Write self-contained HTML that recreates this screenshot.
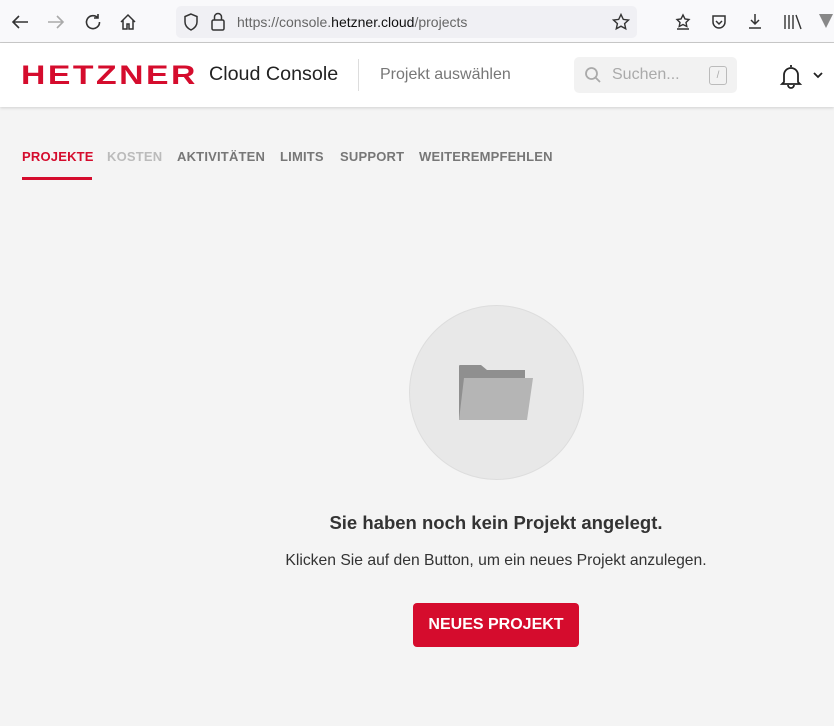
<!DOCTYPE html>
<html><head><meta charset="utf-8"><style>
*{box-sizing:border-box;margin:0;padding:0}
body{width:834px;height:726px;overflow:hidden;background:#f4f4f4;font-family:"Liberation Sans",sans-serif;position:relative}
.bar{position:absolute;left:0;top:0;width:834px;height:43px;background:#f9f9fb;border-bottom:1px solid #ccc}
.url{position:absolute;left:176px;top:6px;width:461px;height:32px;background:#f0f0f4;border-radius:5px}
.hdr{position:absolute;left:0;top:43px;width:834px;height:64px;background:#fff;box-shadow:0 1px 3px rgba(0,0,0,.15)}
.t{position:absolute;white-space:nowrap}
.nav{position:absolute;top:149px;font-size:13px;font-weight:bold;color:#777;letter-spacing:.2px}
svg{position:absolute}
</style></head><body>
<div class="bar">
<svg style="left:10px;top:13px" width="20" height="18" viewBox="0 0 20 18"><path d="M18 9H3M9 3L3 9l6 6" stroke="#333" stroke-width="1.6" fill="none"/></svg>
<svg style="left:46px;top:13px" width="20" height="18" viewBox="0 0 20 18"><path d="M2 9h15M11 3l6 6-6 6" stroke="#aaa" stroke-width="1.6" fill="none"/></svg>
<svg style="left:84px;top:13px" width="18" height="18" viewBox="0 0 18 18"><path d="M14 5A6.5 6.5 0 1 0 15.5 9M14 1v4h-4" stroke="#333" stroke-width="1.6" fill="none"/></svg>
<svg style="left:119px;top:13px" width="18" height="18" viewBox="0 0 18 18"><path d="M2 9L9 2l7 7M4 7v9h4v-5h2v5h4V7" stroke="#333" stroke-width="1.5" fill="none"/></svg>
<div class="url">
<svg style="left:7px;top:7px" width="16" height="18" viewBox="0 0 16 18"><path d="M8 1L2 3.5V9c0 4 3 6.5 6 8 3-1.5 6-4 6-8V3.5z" stroke="#333" stroke-width="1.5" fill="none"/></svg>
<svg style="left:34px;top:6px" width="16" height="19" viewBox="0 0 16 19"><rect x="2" y="8" width="12" height="10" rx="1.5" stroke="#333" stroke-width="1.5" fill="none"/><path d="M4.5 8V5a3.5 3.5 0 0 1 7 0v3" stroke="#333" stroke-width="1.5" fill="none"/></svg>
<div class="t" style="left:61px;top:8px;font-size:14px;color:#666">https://console.<span style="color:#111">hetzner.cloud</span>/projects</div>
<svg style="left:436px;top:7px" width="18" height="18" viewBox="0 0 18 18"><path d="M9 1.5l2.3 4.9 5.2.6-3.9 3.6 1.1 5.2L9 13.2l-4.7 2.6 1.1-5.2L1.5 7l5.2-.6z" stroke="#333" stroke-width="1.4" fill="none"/></svg>
</div>
<svg style="left:674px;top:13px" width="18" height="18" viewBox="0 0 18 18"><path d="M9 2l2 4 4 .5-3 3 .8 4L9 11.5 5.2 13.5 6 9.5 3 6.5 7 6z M3 16h12" stroke="#333" stroke-width="1.4" fill="none"/></svg>
<svg style="left:710px;top:13px" width="18" height="18" viewBox="0 0 18 18"><path d="M3 3h12v6a6 6 0 0 1-12 0z M6 8l3 3 3-3" stroke="#333" stroke-width="1.5" fill="none"/></svg>
<svg style="left:746px;top:12px" width="18" height="18" viewBox="0 0 18 18"><path d="M9 2v10M5 8l4 4 4-4M3 16h12" stroke="#333" stroke-width="1.5" fill="none"/></svg>
<svg style="left:782px;top:13px" width="20" height="18" viewBox="0 0 20 18"><path d="M3 2v14M7 2v14M11 2v14M14 2l5 14" stroke="#333" stroke-width="1.4" fill="none"/></svg>
<svg style="left:818px;top:12px" width="16" height="18" viewBox="0 0 16 18"><path d="M1 2l7 14 7-14z" fill="#888"/></svg>
</div>
<div class="hdr">
<div class="t" style="left:21px;top:17px;font-size:27px;line-height:30px;font-weight:bold;color:#d50c2d;letter-spacing:2px;transform:scaleX(1.25);transform-origin:left">HETZNER</div>
<div class="t" style="left:209px;top:20px;font-size:19.7px;color:#222">Cloud Console</div>
<div style="position:absolute;left:358px;top:16px;width:1px;height:32px;background:#ddd"></div>
<div class="t" style="left:380px;top:23px;font-size:16px;color:#777">Projekt auswählen</div>
<div style="position:absolute;left:574px;top:14px;width:163px;height:36px;background:#f2f2f2;border-radius:5px">
<svg style="left:10px;top:9px" width="18" height="18" viewBox="0 0 18 18"><circle cx="7.5" cy="7.5" r="5.5" stroke="#aaa" stroke-width="1.8" fill="none"/><path d="M11.5 11.5L16 16" stroke="#aaa" stroke-width="1.8"/></svg>
<div class="t" style="left:38px;top:9px;font-size:16px;color:#aaa">Suchen...</div>
<div style="position:absolute;left:135px;top:9px;width:18px;height:19px;border:1px solid #bbb;border-radius:3px;font-size:10px;color:#aaa;text-align:center;line-height:17px">/</div>
</div>
<svg style="left:779px;top:20px" width="24" height="26" viewBox="0 0 24 26"><path d="M12 2v2M5 19V12a7 7 0 0 1 14 0v7l2 2H3z M9 22a3 3 0 0 0 6 0" stroke="#222" stroke-width="1.8" fill="none"/></svg>
<svg style="left:812px;top:27px" width="12" height="10" viewBox="0 0 12 10"><path d="M2 3l4 4 4-4" stroke="#222" stroke-width="1.8" fill="none"/></svg>
</div>
<div class="nav" style="left:22px;color:#d50c2d">PROJEKTE</div>
<div style="position:absolute;left:22px;top:177px;width:70px;height:3px;background:#d50c2d"></div>
<div class="nav" style="left:107px;color:#bbb">KOSTEN</div>
<div class="nav" style="left:177px">AKTIVITÄTEN</div>
<div class="nav" style="left:280px">LIMITS</div>
<div class="nav" style="left:340px">SUPPORT</div>
<div class="nav" style="left:419px">WEITEREMPFEHLEN</div>
<div style="position:absolute;left:409px;top:305px;width:175px;height:175px;border-radius:50%;background:#e8e8e8;border:1px solid #ddd"></div>
<svg style="left:458px;top:364px" width="76" height="58" viewBox="0 0 76 58"><path d="M1 2a1 1 0 0 1 1-1h21l6 5h38v50H1z" fill="#8f8f8f"/><path d="M6 14h69l-6 42H1z" fill="#b5b5b5"/></svg>
<div class="t" style="left:0;width:992px;text-align:center;top:512px;font-size:18.5px;font-weight:bold;color:#333">Sie haben noch kein Projekt angelegt.</div>
<div class="t" style="left:0;width:992px;text-align:center;top:552px;font-size:15.7px;color:#333">Klicken Sie auf den Button, um ein neues Projekt anzulegen.</div>
<div style="position:absolute;left:413px;top:603px;width:166px;height:44px;background:#d50c2d;border-radius:4px;color:#fff;font-weight:bold;font-size:16px;text-align:center;line-height:44px">NEUES PROJEKT</div>
</body></html>
